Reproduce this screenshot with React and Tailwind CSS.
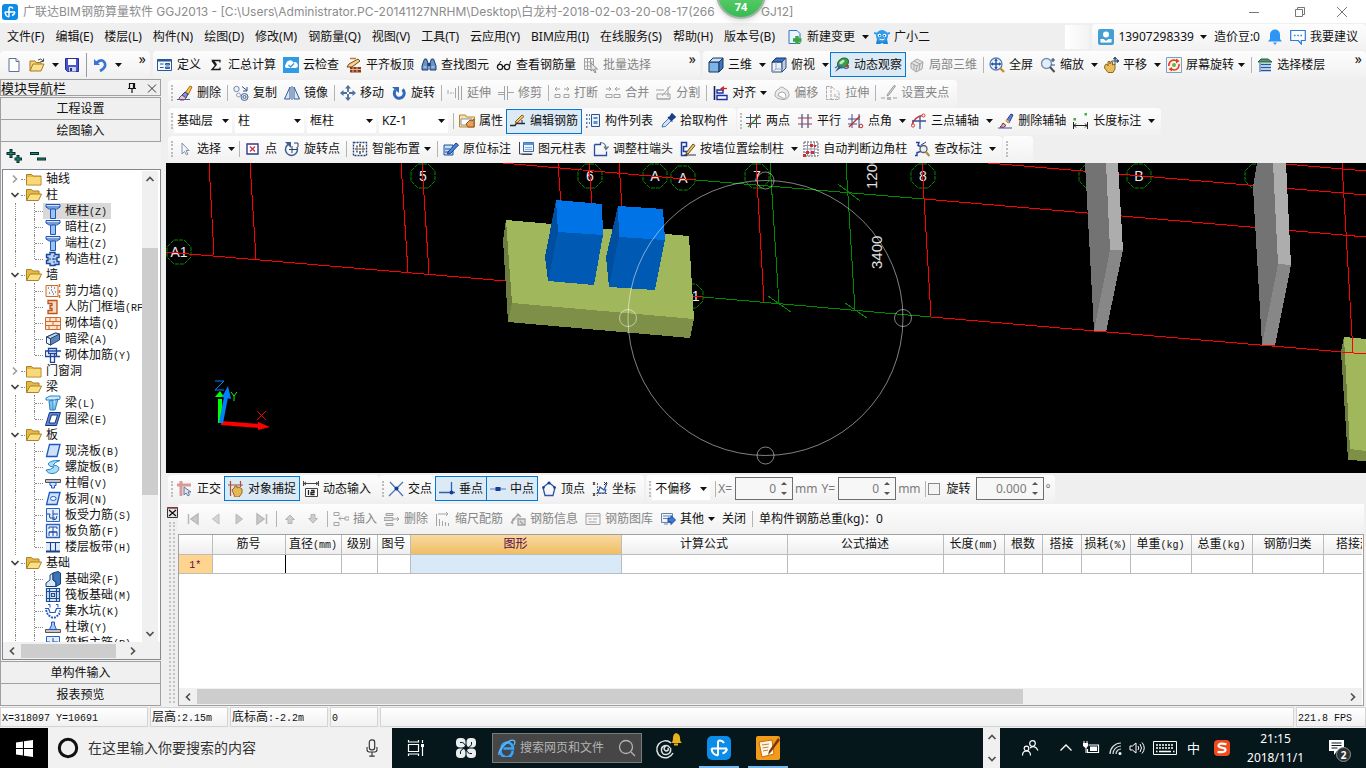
import React, { useState } from 'react';

// Icon drawings, all on a 16 x 16 grid
const ICONS = {
  // file
  newFile: <><path d="M3 1.500h7l3 3v10H3z" fill="#fff" stroke="#5b7394" /><path d="M10 1.500v3h3" fill="#dfe8f3" stroke="#5b7394" /></>,
  open: <><path d="M1 14V4h5l1 1.500h5V8" fill="#f7d57a" stroke="#a8791b" /><path d="M1 14l3-7h11l-3 7z" fill="#fbe08f" stroke="#a8791b" /><path d="M9 3q3-2.500 5 1M14.500 1.500v3h-3" fill="none" stroke="#4d4d4d" /></>,
  save: <><path d="M1.500 1.500h13v13h-11l-2-2z" fill="#4a55c8" stroke="#24308f" /><path d="M4 2h8v6H4z" fill="#fff" /><path d="M5 10h7v4.500H5z" fill="#cdd3f5" /><path d="M6 11h2v3H6z" fill="#24308f" /></>,
  undo: <><path d="M2 2v6h6z" fill="#3c74d6" /><path d="M4 6q6-5 8.500-.5T8 14" fill="none" stroke="#3c74d6" strokeWidth="2.600" /></>,
  // main tool bar
  define: <><path d="M.5 2.500h14v11H.5z" fill="#f4f8ff" stroke="#2b5797" /><path d="M.5 2.500h14v2H.5z" fill="#2b5797" /><path d="M3 7h3.500M3 10.500h3.500" stroke="#2b5797" /><path d="M8.500 6.500h4v1.500h-4zM8.500 10h4v1.500h-4z" fill="#7fb0ef" stroke="#2b5797" /></>,
  sigma: <><path d="M4.500 3.500l3.500 4.500" stroke="#1b1b1b" strokeWidth="2.400" /><path d="M12 5.500V3.500H4.500L8 8l-4 4.500h8v-2" fill="none" stroke="#1b1b1b" strokeWidth="1.300" /></>,
  cloud: <><path d="M0 0h16v16H0z" fill="#2f9be6" /><path d="M3 11a2.500 2.500 0 010-4 4 4 0 017.500-1.500A3 3 0 0113 11z" fill="#fff" /><path d="M5.500 8l2 2 3.500-3.500" fill="none" stroke="#2f9be6" strokeWidth="1.300" /></>,
  levelTop: <><path d="M4 10h11v5.500H4z" fill="#8a3a1c" /><path d="M4 12.500h11M7 10v5M11 10v5" stroke="#e8b08c" /><path d="M1 10l2-3 9-5 2 2-8 6z" fill="#f8cf8e" stroke="#6b4a1c" /><path d="M4 1.500h6" stroke="#c77b1e" strokeWidth="1.500" /></>,
  find: <><path d="M2 6l1.500-4h2L7 6v7H1V9zM9 6l1.500-4h2L14 6l1 3v4H9z" fill="#6a93c8" stroke="#1d3f73" /><path d="M6.500 6h3v3h-3z" fill="#1d3f73" /><path d="M2.500 10h3M10.500 10h3" stroke="#cfe0f5" /></>,
  glasses: <><circle cx="4" cy="10" r="2.600" fill="#fff" stroke="#1c1c1c" strokeWidth="1.300" /><circle cx="11" cy="10" r="2.600" fill="#fff" stroke="#1c1c1c" strokeWidth="1.300" /><path d="M6.500 9.500h2M1.500 9l3.500-5M13.500 9l1-5" fill="none" stroke="#1c1c1c" /></>,
  batch: <><path d="M1.500 1.500h9v11h-9zM1.500 5h9M1.500 9h9M4.500 1.500v11M7.500 1.500v6" fill="none" stroke="#a0a0a0" /><path d="M8 6v8l2-1.500L12 16l1-.5-1.500-3.500h3z" fill="#e6e6e6" stroke="#8f8f8f" /></>,
  box: <><path d="M1 5h10v10H1z" fill="#7fb4e6" stroke="#17365e" /><path d="M1 5l4-4h10l-4 4z" fill="#c9e1f7" stroke="#17365e" /><path d="M11 5l4-4v10l-4 4z" fill="#3f78b8" stroke="#17365e" /></>,
  boxTop: <><path d="M1 5h10v10H1z" fill="#f0f4fa" stroke="#30507c" /><path d="M1 5l4-4h10l-4 4z" fill="#3d72c0" stroke="#17365e" /><path d="M11 5l4-4v10l-4 4z" fill="#c0cfe3" stroke="#30507c" /><path d="M5 5v7h6M5 12l-4 3" fill="none" stroke="#8ea6c6" /></>,
  orbit: <><ellipse cx="9" cy="6" rx="6" ry="4.500" transform="rotate(-35 9 6)" fill="#3b9c4a" stroke="#1f6b30" /><ellipse cx="8" cy="5" rx="3" ry="1.500" transform="rotate(-35 8 5)" fill="#b8edb8" /><path d="M1 11q5-4 8-1t6 0" fill="none" stroke="#3e6fb8" strokeWidth="1.200" /><path d="M1 15l4-6 2.500 1.500z" fill="#35507a" /><circle cx="13.500" cy="9" r="1.500" fill="#c0392b" /></>,
  boxPart: <><path d="M2 6l6-4 6 3-1 7-6 3-5-4z" fill="#e3e3e3" stroke="#a5a5a5" /><path d="M2 6l6 3 6-4M8 9l-1 6M5 4l6 3-1 6M5 7.500V13" fill="none" stroke="#a5a5a5" /></>,
  fullScreen: <><circle cx="7" cy="7" r="6" fill="#eaf2fd" stroke="#5b7fae" strokeWidth="1.300" /><path d="M7 2.500v9M2.500 7h9" stroke="#1f4fa3" strokeWidth="1.300" /><path d="M7 1.500L5.300 4h3.400zM7 12.500L5.300 10h3.400zM1.500 7L4 5.300v3.400zM12.500 7L10 5.300v3.400z" fill="#1f4fa3" /><path d="M11 11l4 4" stroke="#d08a2e" strokeWidth="2.400" /></>,
  zoom: <><circle cx="6.500" cy="6.500" r="5" fill="#e3eefb" stroke="#7890b0" strokeWidth="1.400" /><path d="M10 10l4.500 5" stroke="#4e4e4e" strokeWidth="2" /><path d="M11 3h4M13 1v4M11 8h4" stroke="#2f4f86" strokeWidth="1.200" /></>,
  pan: <><path d="M2 8l2-1 1 2V4.500h2V7l1-2.500 1.500.5V8l1.500-1 1 1v4l-2 3.500H5L1.500 11z" fill="#e8bc5f" stroke="#8f6a1c" /><path d="M12 1v7M8.500 4h7M12 0l-1.500 2h3zM16 4l-2-1.500v3z" stroke="#3a4f74" fill="#3a4f74" /></>,
  screenTurn: <><path d="M.5.5h15v15H.5z" fill="#fff3e0" stroke="#6fa3d8" /><path d="M3 9a5 5 0 015-6l3 1M13 7a5 5 0 01-5 6l-3-1" fill="none" stroke="#e03c2e" strokeWidth="1.600" /><path d="M10 1.500L13.500 4 10 6.500zM6 14.500L2.500 12 6 10z" fill="#e03c2e" /><circle cx="8" cy="8" r="2" fill="#5cb85c" /></>,
  floors: <><path d="M1 5l3-3h7l4 3z" fill="#4f9c66" stroke="#1f5c3c" /><path d="M4 7.500h10M4 10.500h10M4 13.500h10" stroke="#1f5aa8" strokeWidth="1.600" /><path d="M3 6v9" stroke="#1f5aa8" /></>,
  // edit bar
  erase: <><path d="M8 8l5-7 2 1-4 8z" fill="#ffc24d" stroke="#a86b10" /><path d="M5 10l3-3 3 2-2 4z" fill="#7c8fe0" stroke="#303c88" /><path d="M2 13l3-3 4 3-2 2H3z" fill="#f0c4cc" stroke="#7b5060" /><path d="M0 14.500h13" stroke="#3b5f9f" /></>,
  copy: <><circle cx="3.500" cy="4" r="2.700" fill="#eef3fa" stroke="#7487a5" /><circle cx="11.500" cy="12" r="3.500" fill="#dfe8f4" stroke="#4b6592" /><circle cx="11.500" cy="12" r="1.500" fill="none" stroke="#4b6592" /><circle cx="5.500" cy="10" r="2" fill="none" stroke="#8fa0ba" /><path d="M9 1.500l5 4M14 2v4h-4" fill="none" stroke="#27518f" /></>,
  mirror: <><path d="M6 2v12H.5zM10 2v12h5.500z" fill="#d9e8f9" stroke="#345c96" /><path d="M8 1v14" stroke="#345c96" /></>,
  move: <><path d="M8 2v12M2 8h12" stroke="#4d6f9f" strokeWidth="1.800" /><path d="M8 0L5 3.500h6zM8 16l-3-3.500h6zM0 8l3.500-3v6zM16 8l-3.500-3v6z" fill="#4d6f9f" /><path d="M7 7h2v2H7z" fill="#fff" /></>,
  rotate: <><path d="M4.500 5a5 5 0 107-.5" fill="none" stroke="#3569b8" strokeWidth="3" /><path d="M1 2h7v6z" fill="#3569b8" /></>,
  extend: <><path d="M0 8h7M0 6h3" stroke="#a3a3a3" strokeDasharray="2 1" /><path d="M8.500 3v10M11.500 1v14M14.500 1v14" stroke="#a3a3a3" /></>,
  trim: <><path d="M0 7.500h6M10 7.500h6M0 9.500h6" stroke="#a3a3a3" /><path d="M6.500 1v14M9.500 1v14" stroke="#a3a3a3" /></>,
  breakAt: <path d="M1 4h5M10 4h5M3 2L1 4l2 2M13 2l2 2-2 2M1 9.500h5v3H1zM10 9.500h5v3h-5z" fill="none" stroke="#a3a3a3" />,
  join: <path d="M1 4h5M10 4h5M4 2l2 2-2 2M12 2l-2 2 2 2M1 9.500h6v3H1zM9 9.500h6v3H9z" fill="none" stroke="#a3a3a3" />,
  split: <path d="M0 5h8M1 14V9h13v5zM14.500 1L6 11M12 2v10M1 14h13" fill="none" stroke="#a3a3a3" />,
  align: <><path d="M2.500 1v14" stroke="#10225e" strokeWidth="1.600" /><path d="M5 5h6v3H5zM5 10.500h10v4H5z" fill="#fff" stroke="#1a2fa8" strokeWidth="1.400" /><path d="M12 1L8 3.500 12 6z" fill="#d62828" /><path d="M12 3.500h3" stroke="#d62828" strokeWidth="1.300" /></>,
  offset: <><path d="M1 11q0-6 4-7 2-4 6 0 4 1 4 7-2 4-7 3.500T1 11z" fill="#ebebeb" stroke="#a8a8a8" /><path d="M4 11q0-4 4-4t4 4-4 1.500T4 11z" fill="#fff" stroke="#a8a8a8" /></>,
  stretch: <path d="M1.500 1.500H6v13H1.500zM6 1.500l4 3M6 14.500h8v-7l-2-2M10 9v3h3" fill="none" stroke="#a8a8a8" strokeDasharray="3 1" />,
  grip: <><path d="M14.500 1L8 10l-2 1 1-2.500 6-8z" fill="#d6d6d6" stroke="#9b9b9b" /><path d="M0 13h4M12 13h4" stroke="#9b9b9b" /><path d="M6 12h4v3H6z" fill="#b5b5b5" /></>,
  // member bar
  props: <><path d="M.5 2h6l1 2h8v10H.5z" fill="#f9e2a4" stroke="#b58a2c" /><path d="M2 6h11v6H2z" fill="#fff" stroke="#7e93b5" /><path d="M7 11l4-4 2 1 2-2v8H9z" fill="#eaa05a" stroke="#935018" /></>,
  rebar: <><path d="M0 12.500h5q1-3 4-2h6" fill="none" stroke="#2b2b2b" strokeWidth="1.500" /><path d="M12 10.500V7" stroke="#2b2b2b" /><path d="M5 9l7-7 2 1.500-7 6.500z" fill="#f7c66b" stroke="#8a5a14" /></>,
  list: <><path d="M6.500 1.500h8v12h-8z" fill="#e9f1fd" stroke="#28518f" /><path d="M8.500 4h4v2h-4zM8.500 8h4v3h-4z" fill="#5d8fd8" /><path d="M1 2h1.500M1 6h1.500M1 10h1.500M1 14h1.500M4 2h1M4 6h1M4 10h1" stroke="#28518f" strokeWidth="1.600" /></>,
  picker: <><path d="M2 14l1-3 6-6 2.500 2.500-6 6z" fill="#cfe4fb" stroke="#4a76b4" /><path d="M8 4l4.500 4.500M10 4l2-3 3 3-3 2.500z" fill="#1b3f8a" stroke="#1b3f8a" strokeWidth="1.600" /></>,
  twoPoint: <><path d="M4.500 1v14M10.500 1v14M0 4.500h15M0 10.500h15" stroke="#444b66" /><path d="M2 14L14 2" stroke="#2d9b38" strokeWidth="1.500" /><circle cx="4.500" cy="11" r="1.300" fill="#c42b2b" /><circle cx="10.500" cy="5" r="1.300" fill="#c42b2b" /></>,
  parallel: <><path d="M5 1v14M11 1v14" stroke="#3f4f8f" strokeWidth="1.200" /><path d="M1 5h14M1 11h14" stroke="#a83a4a" strokeWidth="1.200" /></>,
  pointAngle: <><path d="M4 1v14M11 1v14M0 6h12M0 11h9" stroke="#3f4f8f" /><path d="M1 14L12 3" stroke="#c42b2b" strokeWidth="1.300" /><circle cx="13" cy="13" r="1.800" fill="none" stroke="#c42b2b" /></>,
  threePoint: <><path d="M1 13q1-9 12-11" fill="none" stroke="#d23333" strokeWidth="1.400" /><path d="M9 3v13M1 8h14" stroke="#3f4f8f" strokeWidth="1.300" /><circle cx="2" cy="12.500" r="1.600" fill="#fff" stroke="#d23333" /><circle cx="12.500" cy="2.500" r="1.500" fill="#fff" stroke="#d23333" /></>,
  brush: <><path d="M8 8l5-7 2 1-4 8z" fill="#5f84d6" stroke="#233f86" /><path d="M8 7l3 2.500" stroke="#f3b13c" strokeWidth="2" /><path d="M2 14q2-1 3-4l3 2.500Q6 15.500 2 14z" fill="#e7b0b8" stroke="#6c3040" /><path d="M0 15h14" stroke="#3f4f8f" /></>,
  dimension: <><path d="M.5 9v7M14.500 9v7M1 12.500h13M3 10.500l-2 2 2 2M12 10.500l2 2-2 2" fill="none" stroke="#222" /><path d="M.5 5h2.500v2.500H.5zM11.500 0H14v2.500h-2.500z" fill="#3fae49" /></>,
  // draw bar
  pointer: <path d="M5 2v11l2.500-2.500L9.500 14l1.500-1-2-3.500h3z" fill="#f5f5f5" stroke="#8091ad" />,
  point: <><path d="M2 3h11v10H2z" fill="#fff" stroke="#2c3e86" strokeWidth="1.400" /><path d="M5 5.500l5 5M10 5.500l-5 5" stroke="#c8324a" strokeWidth="1.300" /><path d="M2 3h1M12 3h1" stroke="#c8324a" /></>,
  rotPoint: <><path d="M5 3a6 6 0 108 3" fill="none" stroke="#3b5f92" strokeWidth="1.500" /><path d="M1 1h6v6z" fill="#3b5f92" /><path d="M8 5v7M5 8.500h8M10 2h4v4" fill="none" stroke="#2c3e66" /></>,
  smart: <><path d="M1.500 1.500h13v13h-13z" fill="#fff" stroke="#27407a" strokeDasharray="2 1" strokeWidth="1.400" /><path d="M8 3v3M8 10v3M3 8h3M10 8h3M5 4.500v2M11 4.500v2M5 9.500v2M11 9.500v2M6.500 8h3" stroke="#1c1c1c" strokeWidth="1.200" /></>,
  noteIn: <><path d="M1 4h9v10H1z" fill="#c7dcf5" stroke="#1f4fa3" /><path d="M2 11h6M2 8h5" stroke="#1f4fa3" /><path d="M5 11l8-9 2.500 2-8 8.500-3 .5z" fill="#4a86dc" stroke="#143d82" /></>,
  tableCol: <><path d="M5.500 1.500h10v9h-10z" fill="#e9f2fd" stroke="#3d68a8" /><path d="M5.500 1.500h10v2.500h-10z" fill="#5b8fd6" /><path d="M7 6.500h7M7 8.500h7" stroke="#8aaedb" /><path d="M1.500 1v12h13M4 13.500h10" fill="none" stroke="#39414f" /></>,
  colEnd: <><path d="M1.500 3.500h6v-2M1.500 3.500v11h12v-4" fill="none" stroke="#2a4c9c" strokeWidth="1.300" /><path d="M7 1.500q6 0 6 6M11 5.500l2 3 2.500-3" fill="none" stroke="#5b6e93" strokeWidth="1.200" /></>,
  byWall: <><path d="M1.500 1.500h5v4h-3v5h3v4h-5z" fill="#fff" stroke="#1c3f9c" strokeWidth="1.500" /><path d="M4 14h12" stroke="#333" /><path d="M6 12l7-9 2 1.500-7 8.500z" fill="#ecc36a" stroke="#6d5016" /></>,
  corner: <><path d="M1 1h14v14H1z" fill="#fff" stroke="#5c5c5c" strokeDasharray="2 1" /><path d="M4.500 1v14M11.500 1v14M8 1v14M1 4.500h14M1 8h14M1 11.500h14" stroke="#8d9ab5" /><path d="M7 3h3v3H7zM3 10h3v3H3zM8 10h3v3H8zM11 4h2v2h-2zM0 13h3v3H0z" fill="#d23030" /></>,
  checkNote: <><path d="M2 1.500h3l-1 3 3 1v5l-4 1v3H1" fill="none" stroke="#1c3fa8" strokeWidth="1.400" /><circle cx="9.500" cy="8" r="3.500" fill="#e6eefa" stroke="#5d5d5d" strokeWidth="1.300" /><path d="M12 11l3.500 4" stroke="#b98a3a" strokeWidth="2.200" /><path d="M7 4l5-3" stroke="#1c3fa8" /></>,
  // snap bar
  ortho: <><path d="M0 4h14M4 0v15" stroke="#d99a9a" strokeWidth="3" /><path d="M7 6v8l2-2 2 3 1.500-1-1.500-3h3z" fill="#dfe6f2" stroke="#5d7398" /></>,
  snap: <><path d="M2.500 0v15M12.500 0v6M0 4h15" stroke="#b04a3c" strokeWidth="1.200" /><path d="M4 9l2-2 1-2h2v2l2-1 3 2v4l-3 4H7z" fill="#e8b657" stroke="#8f6a1c" /></>,
  dynInput: <><path d="M.5 0v5M15.500 0v5M1 2.500h14M3 1L1 2.500 3 4M13 1l2 1.500L13 4" fill="none" stroke="#444" /><path d="M2.500 7.500h12v8h-12z" fill="#fff" stroke="#444" /><path d="M5.500 9v5M8 9.500h3v2H8v2h3.500" fill="none" stroke="#222" strokeWidth="1.300" /></>,
  cross: <><path d="M2 1l13 14M15 1L1 15" stroke="#4a76b8" strokeWidth="1.300" /><circle cx="8.500" cy="7.500" r="2" fill="#143d9c" /></>,
  perp: <><path d="M0 11.500h16M12.500 1v11" stroke="#2f5fae" strokeWidth="1.300" /><circle cx="12.500" cy="11.500" r="2" fill="#143d9c" /></>,
  mid: <><path d="M0 8h16" stroke="#6f96cf" strokeWidth="1.300" /><path d="M5.500 6h5v4h-5z" fill="#143d9c" /></>,
  vertex: <><path d="M8 1.500l6 5-2 8H4l-2-8z" fill="none" stroke="#2a55a8" strokeWidth="1.300" /><circle cx="8" cy="2" r="1.500" fill="#143d9c" /><circle cx="2.500" cy="6.500" r="1.300" fill="#143d9c" /><circle cx="13.500" cy="6.500" r="1.300" fill="#143d9c" /></>,
  coord: <><path d="M5.500 2v13M4 12.500h12" stroke="#666" strokeDasharray="2 1" /><path d="M6 12l2-6 4 3 3-7M6 12h7l1-4" fill="none" stroke="#2a55a8" strokeWidth="1.200" /><path d="M1 1l2 3M3 1L1 4M12 1l3 3M15 1l-3 3M1 12l2 3M3 12l-2 3" stroke="#333" /></>,
  // rebar panel
  first: <path d="M3.500 3v10M13 3v10L6 8z" fill="#c9c9c9" stroke="#b8b8b8" strokeWidth="1.500" />,
  prev: <path d="M11 3v10L4.500 8z" fill="#d5d5d5" stroke="#bcbcbc" />,
  next: <path d="M5 3v10l6.500-5z" fill="#c9c9c9" stroke="#b8b8b8" />,
  last: <path d="M12.500 3v10M3 3v10l7-5z" fill="#c9c9c9" stroke="#b8b8b8" strokeWidth="1.500" />,
  up: <path d="M8 4l4.500 4.500H10v4H6v-4H3.500z" fill="#cdcdcd" stroke="#b5b5b5" />,
  down: <path d="M8 12l4.500-4.500H10v-4H6v4H3.500z" fill="#cdcdcd" stroke="#b5b5b5" />,
  insertRow: <path d="M1 1.500h5v3H1zM1 11.500h5v3H1zM12 6h4v3h-4zM6 7.500h6M8 5.500l-2 2 2 2" fill="none" stroke="#a3a3a3" />,
  deleteRow: <path d="M2 2.500h7v2H2zM0 6.500h9v3H0zM2 12.500h7v2H2zM9 8h6M13 6l2 2-2 2" fill="#e0e0e0" stroke="#a3a3a3" />,
  scaleBar: <path d="M1.500 3v12M4.500 8v7M7.500 10v5M10.500 11v4M13.500 12v3M3 3h10M11 1l2 2-2 2" fill="none" stroke="#a3a3a3" />,
  rebarInfo: <path d="M1 12l7-9 3 3M3 13q-2-3 1-6M8 8h7v6H8zM10 10l3 3" fill="#dedede" stroke="#a3a3a3" strokeWidth="1.300" />,
  rebarLib: <path d="M1 2.500h14v11H1zM1 5h14M3.500 8h3M8 8h4M3.500 11h8" fill="none" stroke="#a3a3a3" />,
  other: <><path d="M1.500 2.500h11v9h-11z" fill="#f0f4fb" stroke="#6a83ab" /><path d="M3 5h7M3 7.500h5M4 13h4" stroke="#6a83ab" /><path d="M8 7h3V4.500L15.500 9 11 13.500V11H8z" fill="#3f78dc" stroke="#174a9c" /></>,
  // menu
  change: <><path d="M2 1.500h8l3 3v10H2z" fill="#eaf4ff" stroke="#2c77c2" /><path d="M10 7v8M6 11h8.500" stroke="#3aa53c" strokeWidth="3.400" /></>,
  mascot: <><path d="M3 10L2 15h4l2-1 2 1h4l-1-5z" fill="#1d86d6" /><circle cx="8" cy="7" r="6" fill="#2b9df0" /><path d="M0 4l4 1M16 4l-4 1" stroke="#2b9df0" strokeWidth="2" /><circle cx="5.500" cy="6.500" r="1.800" fill="#fff" /><circle cx="10.500" cy="6.500" r="1.800" fill="#fff" /><circle cx="5.800" cy="6.700" r=".8" fill="#123" /><circle cx="10.200" cy="6.700" r=".8" fill="#123" /><path d="M5.500 10q2.500 1.800 5 0" stroke="#fff" fill="none" /></>,
  user: <><rect width="16" height="16" rx="2" fill="#459fd4" /><circle cx="8" cy="5.500" r="3" fill="#fff" /><path d="M2.500 13.500V10h3L8 12l2.500-2h3v3.500z" fill="#fff" /></>,
  bell: <><path d="M3 10V5.500a5 5 0 0110 0V10l2 2.500H1z" fill="#2d95f5" /><path d="M6 13.500h4L8 16z" fill="#2d95f5" /></>,
  chat: <><path d="M.7 1.500h14.600v10h-4V15l-3-3.500H.7z" fill="#fff" stroke="#2d7bd8" strokeWidth="1.200" /><path d="M4 6.500h1.500M7.300 6.500h1.500M10.500 6.500H12" stroke="#2d7bd8" strokeWidth="1.500" /></>,
  // tree
  folder: <><path d="M.5 3.500h5l1.500 1.500h8v9H.5z" fill="#e8b93f" stroke="#a9822a" /><path d="M1 6h13.500v7.500H1z" fill="#f8d877" /></>,
  folderOpen: <><path d="M.5 13.500v-11h5L7 4h6v3" fill="#e8b93f" stroke="#a9822a" /><path d="M.5 13.500L4 7h11.500L12.500 13.500z" fill="#fbdf85" stroke="#a9822a" /></>,
  column: <><path d="M1 1.500h14V4l-3 2H4L1 4z" fill="#cfe3fb" stroke="#1f55b5" /><path d="M5.500 6h5v9.500h-5z" fill="#9cc3f3" stroke="#1f55b5" /><path d="M1 4h14" stroke="#1f55b5" /></>,
  columnTie: <><path d="M5 1.500h5v2h4v3h-2v4h2v3h-4v1H5v-2H1.500v-3H3v-3H1.500v-3H5z" fill="#b9d5f7" stroke="#1a4698" strokeWidth="1.400" /><path d="M9 4v8M4 8h8" stroke="#1a4698" strokeDasharray="2 1" /></>,
  shearWall: <><path d="M1 2.500h12v11H1z" fill="#f4f4f4" stroke="#d56b2b" /><path d="M3 5h1M6 7h1M9 5h1M4 10h1M8 11h1M10 9h1M6 4h1M7 9h1" stroke="#444" /><path d="M14.500 1v3M14.500 7v3M14.500 12v3" stroke="#d56b2b" strokeWidth="1.500" /></>,
  doorWall: <path d="M3 1.500h9v13H3v-3h4v-2H5v-3h2v-2H3z" fill="#f6dcc6" stroke="#b9521b" strokeWidth="1.300" />,
  brick: <><path d="M.5 2.500h15v12H.5z" fill="#ffe6d3" stroke="#cf6a2d" /><path d="M1 6.500h14M1 10.500h14M5 2.500v4M11 2.500v4M8 6.500v4M4 10.500v4M12 10.500v4" stroke="#cf6a2d" /></>,
  hiddenBeam: <><path d="M1.500 6l9-4 4 1v6l-9 5-4-2z" fill="#5b86bd" stroke="#27436e" /><path d="M1.500 6l4 1.500v6.500l-4-2z" fill="#e9f1fb" stroke="#27436e" /><path d="M5.500 7.500l9-4.500-4-1-9 4z" fill="#c4d7ee" stroke="#27436e" /></>,
  brickRebar: <path d="M3.500 1.500h8v5h-8zM0 4h16M0 9.500h15M.5 4v5.500M5.500 6.500v9h4v-9M11.500 4v5" fill="none" stroke="#1b47a0" strokeWidth="1.300" />,
  beam: <><path d="M1 3l4-2h10v3l-3 1H1z" fill="#cfe8fb" stroke="#2383c6" /><path d="M4 6l4-1v10H5zM10 5l3-1-3 11H8" fill="#7fc1ee" stroke="#2383c6" /></>,
  ring: <><path d="M4.500 1.500h11l-4 13H.5z" fill="#5f8ad8" stroke="#15357c" /><path d="M6.500 4h6l-2.500 8H4z" fill="#fff" stroke="#15357c" /></>,
  slab: <path d="M4.500 1.500H15l-3 12H1.500z" fill="#cfe2fb" stroke="#1d57c0" strokeWidth="1.300" />,
  spiral: <path d="M15 1.500Q5 1 3 5q1 3 6 3Q6 11 1 11q2 4 7 3.500 6-1 6-6-2-2.500-6-2.500 2-3 7-4.500z" fill="#a9dcf7" stroke="#2187c8" />,
  cap: <><path d="M.5 4.500h15v3H.5z" fill="#c4c4c4" stroke="#555" /><path d="M5 7.500h6v3H9.500V13h-3v-2.500H5z" fill="#cfe2fb" stroke="#1d57c0" /></>,
  slabHole: <><path d="M4.500 1.500H15l-3 12H1.500z" fill="#cfe2fb" stroke="#1d57c0" strokeWidth="1.300" /><ellipse cx="8.300" cy="7.500" rx="2.800" ry="2" fill="#fff" stroke="#1d57c0" /></>,
  slabRebar: <><path d="M1.500 1.500h13v13h-13z" fill="#e4effd" stroke="#2a62c4" /><path d="M2 7h3M5 11h5M8 3v10M8 13q4 0 4-4M8 7h5M5 11q-1-2 0-4" fill="none" stroke="#1b47a0" /></>,
  slabNeg: <><path d="M1.500 1.500h13v13h-13z" fill="#eef5ff" stroke="#2a62c4" strokeWidth="1.300" /><path d="M4 13V9h8v4M4 6V4h8v2M8 4v9M4 9h8" fill="none" stroke="#1b47a0" /></>,
  strip: <><path d="M1 3.500h14v9H1z" fill="#d7e7fb" /><path d="M1 12.500h14" stroke="#1c3f86" strokeWidth="2" /><path d="M1 3.500h14M5.500 3v9M10.500 3v9" stroke="#1c3f86" /><path d="M3 5v6M8 5v6M13 5v6" stroke="#fff" strokeDasharray="1 1" /></>,
  footBeam: <><path d="M1 12l4-3V4l3-2v7l3 2v4.500H1z" fill="#d9e8f8" stroke="#173f73" /><path d="M8 2l5-1.500L15.500 2v11l-4.500 2.500V11L8 9z" fill="#3c74b5" stroke="#173f73" /></>,
  raft: <path d="M1.500 1.500h13v13h-13zM4.500 1.500v13M11.500 1.500v13M1.500 4.500h13M1.500 11.500h13M6.500 6.500h3v3h-3z" fill="#d9e8fb" stroke="#1a4f96" strokeWidth="1.200" />,
  pit: <><path d="M0 5.500h3.500l1.500 4h5l1.500-4H16" fill="none" stroke="#1d57c0" strokeWidth="1.200" /><path d="M1 7l2 5 4 2.500h3l4-3 1-4" fill="none" stroke="#1d57c0" strokeDasharray="2 1" strokeWidth="1.800" /><path d="M3 1.500h2v3M11 1.500h2v3" fill="none" stroke="#1d57c0" /></>,
  pier: <><path d="M.5 10.500h15v3H.5z" fill="#c4c4c4" stroke="#555" /><path d="M6.500 3h3v3l2 4.500h-7l2-4.500z" fill="#a9c8f3" stroke="#1d57c0" /></>,
};

const Icon = ({ name, className = 'size-4' }) => (
  <svg viewBox="0 0 16 16" className={`${className} shrink-0`} aria-hidden="true">{ICONS[name]}</svg>
);

const Arrow = () => (
  <svg viewBox="0 0 7 4" className="h-1 w-[7px] shrink-0" aria-hidden="true"><path d="M0 0h7L3.500 4z" fill="#111" /></svg>
);

const CHEVRONS = { up: 'M1.500 7L5 3.500 8.500 7', down: 'M1.500 3L5 6.500 8.500 3', left: 'M7 1.500L3.500 5 7 8.500', right: 'M3 1.500L6.500 5 3 8.500' };

const Chevron = ({ dir, color = '#505050' }) => (
  <svg viewBox="0 0 10 10" className="size-[10px] shrink-0" aria-hidden="true"><path d={CHEVRONS[dir]} fill="none" stroke={color} strokeWidth="1.700" /></svg>
);

const Grip = () => <span className="mr-px h-4 w-0 shrink-0 border-l-2 border-dotted border-[#bdbdbd]" />;
const Sep = () => <span className="mx-[2px] h-4 w-px shrink-0 bg-[#b4b4b4]" />;

// Mixed text: Chinese glyphs are full width, Latin ones half width
const Song = ({ children }) =>
  children.split(/([\x20-\x7e]+)/).map((part, i) =>
    i % 2 ? <span key={i} className="whitespace-pre text-[10px] leading-none [font-family:'Liberation_Mono',monospace]">{part}</span> : part
  );

const Tool = ({ icon, label, title, arrow, disabled, active }) => (
  <>
    <button
      type="button"
      disabled={disabled}
      aria-label={title}
      aria-pressed={active}
      className={`-ml-px flex h-[25px] shrink-0 items-center gap-1 whitespace-nowrap border px-[3px] ${
        active ? 'relative border-[#0078d7] bg-[#dceaf6]' : 'border-transparent'
      } ${disabled ? 'text-[#858585]' : 'text-[#111]'}`}
    >
      {icon && <Icon name={icon} />}
      {label && <span>{label}</span>}
      {arrow === 'menu' && <Arrow />}
    </button>
    {arrow === 'split' && (
      <button type="button" aria-label={`${label || title} 更多`} className="flex h-[25px] w-3 shrink-0 items-center justify-center"><Arrow /></button>
    )}
  </>
);

const Tools = ({ items }) => items.map((item, i) => (item === '|' ? <Sep key={i} /> : <Tool key={i} {...item} />));

const Group = ({ children, className = 'pl-[3px] pr-1' }) => (
  <div className={`flex h-[27px] shrink-0 items-center rounded-sm bg-linear-to-b from-[#fdfdfd] to-[#f1f1f1] ${className}`}>{children}</div>
);

const Combo = ({ label, options, className }) => (
  <label className={`relative mr-[3px] flex h-[23px] shrink-0 items-center bg-white ${className}`}>
    <select aria-label={label} className="h-full w-full appearance-none bg-transparent pl-[3px] outline-none">
      {options.map(o => <option key={o}>{o}</option>)}
    </select>
    <span className="pointer-events-none absolute right-[3px]"><Arrow /></span>
  </label>
);

const Spin = ({ label, value, className }) => (
  <span className={`flex h-[23px] shrink-0 items-center border border-[#6e6e6e] bg-[#f7f7f7] ${className}`}>
    <input aria-label={label} defaultValue={value} disabled className="w-full min-w-0 flex-1 bg-transparent text-right text-[#7b7b7b]" />
    <span className="flex h-full w-4 shrink-0 flex-col items-center justify-around">
      <svg viewBox="0 0 6 3" className="h-[3px] w-[6px]"><path d="M0 3h6L3 0z" fill="#555" /></svg>
      <svg viewBox="0 0 6 3" className="h-[3px] w-[6px]"><path d="M0 0h6L3 3z" fill="#555" /></svg>
    </span>
  </span>
);

const MENUS = ['文件(F)', '编辑(E)', '楼层(L)', '构件(N)', '绘图(D)', '修改(M)', '钢筋量(Q)', '视图(V)', '工具(T)', '云应用(Y)', 'BIM应用(I)', '在线服务(S)', '帮助(H)', '版本号(B)'];

const MAIN_TOOLS = [
  { icon: 'define', label: '定义' },
  { icon: 'sigma', label: '汇总计算' },
  { icon: 'cloud', label: '云检查' },
  { icon: 'levelTop', label: '平齐板顶' },
  { icon: 'find', label: '查找图元' },
  { icon: 'glasses', label: '查看钢筋量' },
  { icon: 'batch', label: '批量选择', disabled: true },
];

const VIEW_TOOLS = [
  { icon: 'box', label: '三维', arrow: 'split' },
  { icon: 'boxTop', label: '俯视', arrow: 'split' },
  { icon: 'orbit', label: '动态观察', active: true },
  { icon: 'boxPart', label: '局部三维', disabled: true },
  '|',
  { icon: 'fullScreen', label: '全屏' },
  { icon: 'zoom', label: '缩放', arrow: 'split' },
  { icon: 'pan', label: '平移', arrow: 'split' },
  { icon: 'screenTurn', label: '屏幕旋转', arrow: 'menu' },
  '|',
  { icon: 'floors', label: '选择楼层' },
];

const EDIT_TOOLS = [
  { icon: 'erase', label: '删除' },
  '|',
  { icon: 'copy', label: '复制' },
  { icon: 'mirror', label: '镜像' },
  '|',
  { icon: 'move', label: '移动' },
  { icon: 'rotate', label: '旋转' },
  '|',
  { icon: 'extend', label: '延伸', disabled: true },
  { icon: 'trim', label: '修剪', disabled: true },
  '|',
  { icon: 'breakAt', label: '打断', disabled: true },
  { icon: 'join', label: '合并', disabled: true },
  { icon: 'split', label: '分割', disabled: true },
  '|',
  { icon: 'align', label: '对齐', arrow: 'menu' },
  { icon: 'offset', label: '偏移', disabled: true },
  { icon: 'stretch', label: '拉伸', disabled: true },
  '|',
  { icon: 'grip', label: '设置夹点', disabled: true },
];

const MEMBER_TOOLS = [
  '|',
  { icon: 'props', label: '属性' },
  { icon: 'rebar', label: '编辑钢筋', active: true },
  { icon: 'list', label: '构件列表' },
  { icon: 'picker', label: '拾取构件' },
];

const AXIS_TOOLS = [
  { icon: 'twoPoint', label: '两点' },
  { icon: 'parallel', label: '平行' },
  { icon: 'pointAngle', label: '点角', arrow: 'split' },
  { icon: 'threePoint', label: '三点辅轴', arrow: 'split' },
  { icon: 'brush', label: '删除辅轴' },
  { icon: 'dimension', label: '长度标注', arrow: 'split' },
];

const DRAW_TOOLS = [
  { icon: 'pointer', label: '选择', arrow: 'split' },
  '|',
  { icon: 'point', label: '点' },
  { icon: 'rotPoint', label: '旋转点' },
  '|',
  { icon: 'smart', label: '智能布置', arrow: 'menu' },
  '|',
  { icon: 'noteIn', label: '原位标注' },
  { icon: 'tableCol', label: '图元柱表' },
  { icon: 'colEnd', label: '调整柱端头' },
  { icon: 'byWall', label: '按墙位置绘制柱', arrow: 'split' },
  { icon: 'corner', label: '自动判断边角柱' },
  { icon: 'checkNote', label: '查改标注', arrow: 'split' },
];

const SNAP_MODES = [
  { icon: 'ortho', label: '正交' },
  { icon: 'snap', label: '对象捕捉', active: true },
  { icon: 'dynInput', label: '动态输入' },
];

const SNAP_POINTS = [
  { icon: 'cross', label: '交点' },
  { icon: 'perp', label: '垂点', active: true },
  { icon: 'mid', label: '中点', active: true },
  { icon: 'vertex', label: '顶点' },
  { icon: 'coord', label: '坐标' },
];

const REBAR_TOOLS = [
  { icon: 'first', title: '首行', disabled: true },
  { icon: 'prev', title: '上一行', disabled: true },
  { icon: 'next', title: '下一行', disabled: true },
  { icon: 'last', title: '末行', disabled: true },
  '|',
  { icon: 'up', title: '上移', disabled: true },
  { icon: 'down', title: '下移', disabled: true },
  '|',
  { icon: 'insertRow', label: '插入', disabled: true },
  { icon: 'deleteRow', label: '删除', disabled: true },
  { icon: 'scaleBar', label: '缩尺配筋', disabled: true },
  { icon: 'rebarInfo', label: '钢筋信息', disabled: true },
  { icon: 'rebarLib', label: '钢筋图库', disabled: true },
  { icon: 'other', label: '其他', arrow: 'menu' },
  { label: '关闭' },
  '|',
];

const TREE = [
  { label: '轴线' },
  { label: '柱', items: [['column', '框柱(Z)'], ['column', '暗柱(Z)'], ['column', '端柱(Z)'], ['columnTie', '构造柱(Z)']] },
  { label: '墙', items: [['shearWall', '剪力墙(Q)'], ['doorWall', '人防门框墙(RF)'], ['brick', '砌体墙(Q)'], ['hiddenBeam', '暗梁(A)'], ['brickRebar', '砌体加筋(Y)']] },
  { label: '门窗洞' },
  { label: '梁', items: [['beam', '梁(L)'], ['ring', '圈梁(E)']] },
  {
    label: '板',
    items: [['slab', '现浇板(B)'], ['spiral', '螺旋板(B)'], ['cap', '柱帽(V)'], ['slabHole', '板洞(N)'], ['slabRebar', '板受力筋(S)'], ['slabNeg', '板负筋(F)'], ['strip', '楼层板带(H)']],
  },
  {
    label: '基础',
    items: [['footBeam', '基础梁(F)'], ['raft', '筏板基础(M)'], ['pit', '集水坑(K)'], ['pier', '柱墩(Y)'], ['slabRebar', '筏板主筋(R)']],
  },
];

const COLUMNS = [
  ['', 'w-[33px]'],
  ['筋号', 'w-[73px]'],
  ['直径(mm)', 'w-[56px]'],
  ['级别', 'w-[36px]'],
  ['图号', 'w-[33px]'],
  ['图形', 'w-[211px]'],
  ['计算公式', 'w-[166px]'],
  ['公式描述', 'w-[156px]'],
  ['长度(mm)', 'w-[61px]'],
  ['根数', 'w-[38px]'],
  ['搭接', 'w-[39px]'],
  ['损耗(%)', 'w-[49px]'],
  ['单重(kg)', 'w-[61px]'],
  ['总重(kg)', 'w-[61px]'],
  ['钢筋归类', 'w-[71px]'],
  ['搭接形式', 'w-[74px]'],
];

function TitleBar() {
  return (
    <header className="relative flex h-[23px] shrink-0 items-center bg-white pl-[2px] text-[#8c8c8c]">
      <svg viewBox="0 0 16 16" className="mr-[5px] size-4" aria-hidden="true">
        <rect width="16" height="16" rx="3" fill="#0c8ce9" />
        <path d="M11 4.500Q10 3 8.500 3T7 5v8M3 8h10M3 8q.5 4.500 4 5M13 8q-.5 2.500-3 3.500" fill="none" stroke="#fff" strokeWidth="1.500" />
      </svg>
      <h1 className="flex flex-1 whitespace-nowrap [font-family:'Inter','Noto_Sans_CJK_SC',sans-serif]">
        <span className="w-[698px] shrink-0">{'广联达BIM钢筋算量软件 GGJ2013 - [C:\\Users\\Administrator.PC-20141127NRHM\\Desktop\\白龙村-2018-02-03-20-08-17(266'}</span>
        <span className="ml-10">GJ12]</span>
      </h1>
      <div className="flex gap-[22px] pr-4">
        <button type="button" aria-label="最小化" className="px-1">
          <svg viewBox="0 0 16 16" className="size-4"><path d="M3 8.500h10" stroke="#777" /></svg>
        </button>
        <button type="button" aria-label="还原" className="px-1">
          <svg viewBox="0 0 16 16" className="size-4"><path d="M3.500 5.500h7v7h-7zM5.500 5.500v-2h7v7h-2" fill="none" stroke="#777" /></svg>
        </button>
        <button type="button" aria-label="关闭窗口">
          <svg viewBox="0 0 16 16" className="size-4"><path d="M3 3l10 10M13 3L3 13" stroke="#777" /></svg>
        </button>
      </div>
      {/* floating accelerator ball */}
      <div className="absolute -top-[31px] left-[716px] z-10 flex size-[50px] items-end justify-center rounded-full border-2 border-[#a9b5ac] bg-linear-to-b from-[#7be07f] to-[#35bb53] pb-1 text-[11px] font-bold leading-3 text-white shadow-md">74</div>
    </header>
  );
}

function MenuBar() {
  return (
    <div className="flex h-[28px] shrink-0 items-center pl-[2px]">
      <nav className="flex items-center gap-px">
        {MENUS.map(m => <button key={m} type="button" className="whitespace-nowrap px-[5px]">{m}</button>)}
      </nav>
      <div className="ml-1 flex items-center">
        <Tools items={[{ icon: 'change', label: '新建变更', arrow: 'split' }, { icon: 'mascot', label: '广小二' }]} />
      </div>
      <span className="ml-auto mr-[3px] h-6 w-6 bg-linear-to-r from-white to-[#f3f3f3]" />
      <Group>
        <Tools items={[{ icon: 'user', label: '13907298339', arrow: 'split' }]} />
        <span className="mx-1">造价豆:0</span>
        <Tools items={[{ icon: 'bell', title: '消息' }, { icon: 'chat', label: '我要建议' }]} />
      </Group>
    </div>
  );
}

function MainBar() {
  return (
    <div className="flex h-[27px] shrink-0 items-center gap-[3px]">
      <Group className="w-[150px] pl-[3px] pr-1">
        <Tools items={[{ icon: 'newFile', title: '新建' }, { icon: 'open', title: '打开', arrow: 'split' }, { icon: 'save', title: '保存' }]} />
        <span className="mx-[2px] h-6 w-px bg-[#9a9a9a]" />
        <Tools items={[{ icon: 'undo', title: '撤销', arrow: 'split' }]} />
        <span className="-mt-3 ml-auto text-sm">»</span>
      </Group>
      <Group className="w-[547px] pl-px pr-1">
        <Tools items={MAIN_TOOLS} />
        <span className="-mt-3 ml-auto text-sm">»</span>
      </Group>
      <Group className="min-w-0 flex-1 pl-[2px] pr-1">
        <Tools items={VIEW_TOOLS} />
        <span className="-mt-3 ml-auto text-sm">»</span>
      </Group>
    </div>
  );
}

function TreeLeaf({ icon, label, last, selected, onSelect }) {
  return (
    <li className="flex h-4 items-center">
      <span className="h-full w-[13px] shrink-0 border-r border-dotted border-[#8a8a8a]" />
      <span className={`w-[19px] shrink-0 self-start border-r border-dotted border-[#8a8a8a] ${last ? 'h-1/2' : 'h-full'}`} />
      <span className="w-2 shrink-0 border-t border-dotted border-[#8a8a8a]" />
      <button type="button" onClick={onSelect} className={`flex h-4 items-center gap-1 whitespace-nowrap pl-[2px] pr-1 leading-4 ${selected ? 'bg-[#d9d9d9]' : ''}`}>
        <Icon name={icon} />
        <span><Song>{label}</Song></span>
      </button>
    </li>
  );
}

function Sidebar() {
  const [selected, setSelected] = useState('框柱(Z)');
  const [closed, setClosed] = useState({});
  const wide = 'flex h-[22px] w-full shrink-0 items-center justify-center border-x border-b border-[#a0a0a0] bg-[#f0f0f0]';

  return (
    <aside className="flex w-[161px] shrink-0 flex-col">
      <div className="flex h-[17px] shrink-0 items-center border border-[#a0a0a0] text-[13px] leading-4">
        <span className="flex-1">模块导航栏</span>
        <button type="button" aria-label="固定">
          <svg viewBox="0 0 12 12" className="mr-2 size-3"><path d="M3.500 1.500h5v5h-5zM7.500 1.500v5M2 6.500h8M6 7v4" fill="none" stroke="#111" strokeWidth="1.200" /></svg>
        </button>
        <button type="button" aria-label="关闭导航栏">
          <svg viewBox="0 0 12 12" className="mr-[2px] size-3"><path d="M2 2.500l8 8M10 2.500l-8 8" stroke="#333" /></svg>
        </button>
      </div>
      <div className="mt-px flex shrink-0 flex-col border-t border-[#a0a0a0]">
        <button type="button" className={wide}>工程设置</button>
        <button type="button" className={wide}>绘图输入</button>
      </div>
      <div className="flex min-h-0 flex-1 flex-col border-l border-[#a0a0a0] bg-[#f3f3f3] pb-px pl-px">
        <div className="flex h-[27px] shrink-0 items-center gap-2 pl-1 pt-px">
          <button type="button" aria-label="全部展开">
            <svg viewBox="0 0 16 14" className="h-[14px] w-4"><path d="M5 0v9M.500 4.500h9" stroke="#0b2b26" strokeWidth="3" /><path d="M5 1v7M1.500 4.500h7" stroke="#1f8f7c" /><path d="M12 6v8M8.500 10h7.500" stroke="#0b2b26" strokeWidth="3" /><path d="M12 7v6M9 10h6" stroke="#1f8f7c" /></svg>
          </button>
          <button type="button" aria-label="全部折叠">
            <svg viewBox="0 0 16 14" className="h-[14px] w-4"><path d="M0 4.500h9M7 10h9" stroke="#0b2b26" strokeWidth="3" /><path d="M1 4.500h7M8 10h7" stroke="#1f8f7c" /></svg>
          </button>
        </div>
        <div className="flex min-h-0 flex-1 flex-col border border-[#828790] bg-white pt-px">
          <div className="flex min-h-0 flex-1 pr-[2px]">
            <ul className="min-w-0 flex-1 overflow-hidden">
              {TREE.map(({ label, items }) => {
                const isOpen = items && !closed[label];
                return (
                  <li key={label}>
                    <button type="button" onClick={() => setClosed({ ...closed, [label]: !closed[label] })} className="flex h-4 items-center leading-4">
                      <span className="flex w-[18px] justify-end pr-px"><Chevron dir={isOpen ? 'down' : 'right'} color={isOpen ? '#404040' : '#a0a0a0'} /></span>
                      <span className="mr-px w-1 border-t border-dotted border-[#8a8a8a]" />
                      <Icon name={isOpen ? 'folderOpen' : 'folder'} />
                      <span className="ml-1">{label}</span>
                    </button>
                    {isOpen && (
                      <ul>
                        {items.map(([icon, name], i) => (
                          <TreeLeaf key={name} icon={icon} label={name} last={i === items.length - 1} selected={selected === name} onSelect={() => setSelected(name)} />
                        ))}
                      </ul>
                    )}
                  </li>
                );
              })}
            </ul>
            <div className="flex w-4 shrink-0 flex-col items-center bg-[#f0f0f0] py-[3px]">
              <Chevron dir="up" />
              <div className="mt-[64px] h-[247px] w-full bg-[#cdcdcd]" />
              <div className="mt-auto"><Chevron dir="down" /></div>
            </div>
          </div>
          <div className="flex h-[17px] shrink-0 items-center bg-[#f0f0f0] pl-1">
            <Chevron dir="left" />
            <div className="mx-1 h-[14px] w-[95px] bg-[#cdcdcd]" />
            <span className="ml-2"><Chevron dir="right" /></span>
          </div>
        </div>
      </div>
      <div className="flex shrink-0 flex-col border-t border-[#a0a0a0]">
        <button type="button" className={wide}>单构件输入</button>
        <button type="button" className={wide}>报表预览</button>
      </div>
    </aside>
  );
}

// Axis number in its bubble
const Bubble = ({ x, y, text }) => (
  <g>
    <path d={`M${x - 5} ${y - 12}h10l7 7v10l-7 7h-10l-7-7v-10z`} fill="none" stroke="#008a00" strokeDasharray="4 1" />
    {text && <text x={x} y={y + 5} textAnchor="middle" fill="#e8e8e8" fontSize="14">{text}</text>}
  </g>
);

function Viewport() {
  return (
    <div className="min-h-0 flex-1 overflow-hidden bg-black">
      <svg viewBox="0 0 1200 310" preserveAspectRatio="xMinYMin slice" className="h-full w-full [font-family:'Liberation_Sans',sans-serif]" role="img" aria-label="三维视图">
        <Bubble x={13} y={89} text="A1" />
        <Bubble x={257} y={13} text="5" />
        <Bubble x={424} y={13} text="6" />
        <Bubble x={489} y={13} text="A" />
        <Bubble x={517} y={15} text="A" />
        <Bubble x={591} y={13} text="7" />
        <Bubble x={757} y={13} text="8" />
        <Bubble x={973} y={13} text="B" />
        <Bubble x={925} y={13} />
        <Bubble x={1091} y={13} />
        <Bubble x={525} y={133} text="A1" />

        <g stroke="#ff0000" fill="none" shapeRendering="crispEdges">
          <path d="M43 0l5 92M84 0l6 96M235 0l7 109M256 0l7 111M392 0l3 42M423 0l3 42M453 0l3 45M590 0l8 139M756 0l9 154" />
          <path d="M0 89l340 29M337 0l193 17M526 133h11M758 36l442 38M765 154l435 37M822 0l378 32M1119 1l81 7" />
        </g>
        <g stroke="#008a00" fill="none" shapeRendering="crispEdges">
          <path d="M530 17l228 19M537 134l228 20M604 0l9 141M680 0l9 147M672 21l22 17M602 133l23 16M679 140l22 15" />
        </g>

        {/* foundation and the two columns */}
        <g shapeRendering="crispEdges">
          <path d="M340 57l183 16 5 83-182-16z" fill="#a0b75c" />
          <path d="M340 57l-3 20 5 82 4-19z" fill="#6d7d3f" />
          <path d="M346 140l182 16-4 19-182-16z" fill="#7e9048" />
          <path d="M390 37l46 4 1 31-45-3z" fill="#0073e6" />
          <path d="M392 69l45 3-9 50-46-4z" fill="#005ab4" />
          <path d="M390 37l2 32-10 49-3-24z" fill="#004f9e" />
          <path d="M452 43l45 3 2 31-46-3z" fill="#0073e6" />
          <path d="M453 74l46 3-10 50-46-3z" fill="#005ab4" />
          <path d="M452 43l1 31-10 50-3-30z" fill="#004f9e" />
        </g>

        {/* walls */}
        <g shapeRendering="crispEdges">
          <path d="M919 0h21l4 87-16 81z" fill="#737373" />
          <path d="M940 0h12l5 87h-13z" fill="#adadad" />
          <path d="M944 87h13l-17 82-12-1z" fill="#878787" />
          <path d="M1091 0h16l5 101-16 81-9-158z" fill="#737373" />
          <path d="M1107 0h13l5 102-13-1z" fill="#adadad" />
          <path d="M1112 101l13 1-16 81-13-1z" fill="#878787" />
          <path d="M1178 174l22 2v112l-16-2z" fill="#a0b75c" />
          <path d="M1178 174l-3 15 7 108 2-11z" fill="#6d7d3f" />
          <path d="M1184 286l16 2v10l-18-1z" fill="#7e9048" />
          <path d="M1176 0l11 190M1176 189l24 2M928 168l12 1M1096 182l13 1" stroke="#ff0000" fill="none" />
        </g>

        <g fill="#e0e0e0" fontSize="15">
          <text transform="translate(716 106) rotate(-90)">3400</text>
          <text transform="translate(711 26) rotate(-90)">1200</text>
        </g>

        {/* orbit ring */}
        <g fill="none" stroke="#fff" strokeOpacity=".5">
          <circle cx="599.500" cy="155" r="137.500" />
          <circle cx="462" cy="155" r="8.500" />
          <circle cx="737" cy="155" r="8.500" />
          <circle cx="599.500" cy="17.500" r="8.500" />
          <circle cx="599.500" cy="292.500" r="8.500" />
        </g>

        {/* view axes */}
        <path d="M55 260l38 3" stroke="#f00" strokeWidth="4" />
        <path d="M92 259l12 5-12 3z" fill="#f00" />
        <path d="M54 260v-24" stroke="#0f0" strokeWidth="4" />
        <path d="M54 228l-5 6h9z" fill="#0f0" />
        <path d="M55 260l5-26" stroke="#0080ff" strokeWidth="4" />
        <path d="M62 223l-6 11 9 2z" fill="#0080ff" />
        <path d="M91 248l9 9M100 248l-9 9" stroke="#f00" />
        <path d="M65 229l3 4 3-4M68 233v5" stroke="#0f0" fill="none" />
        <path d="M49 218h9l-9 9h9" stroke="#0080ff" fill="none" />
      </svg>
    </div>
  );
}

function SnapBar() {
  return (
    <div className="flex h-[31px] shrink-0 items-center pl-[2px]">
      <Group><Grip /><Tools items={SNAP_MODES} /></Group>
      <Group><Grip /><Tools items={SNAP_POINTS} /></Group>
      <Group className="ml-[2px] pl-[3px] pr-1">
        <Grip />
        <Combo label="偏移方式" options={['不偏移', '正交偏移', '极坐标偏移']} className="w-[58px]" />
        <Sep />
        <span className="mr-[3px] text-[#7b7b7b]">X=</span>
        <Spin label="X" value="0" className="w-[58px]" />
        <span className="ml-[2px] mr-1 text-[#7b7b7b]">mm</span>
        <span className="mr-[3px] text-[#7b7b7b]">Y=</span>
        <Spin label="Y" value="0" className="w-[58px]" />
        <span className="ml-[2px] mr-[2px] text-[#7b7b7b]">mm</span>
        <Sep />
        <label className="mr-[5px] flex items-center gap-[7px]">
          <input type="checkbox" className="size-3 appearance-none border border-[#8a8a8a] bg-[#f4f4f4]" />
          旋转
        </label>
        <Spin label="旋转角度" value="0.000" className="w-[68px]" />
        <span className="ml-[2px] text-[#7b7b7b]">°</span>
      </Group>
    </div>
  );
}

function RebarPanel() {
  return (
    <section className="flex h-[202px] shrink-0">
      <div className="flex w-3 shrink-0 flex-col items-center gap-1 py-[3px]">
        <button type="button" aria-label="关闭钢筋表">
          <svg viewBox="0 0 11 11" className="size-[11px]"><path d="M.5.5h10v10H.5z" fill="#e4e4e4" stroke="#333" /><path d="M0 1h11" stroke="#8f3c46" strokeWidth="1.500" /><path d="M2 3l7 6M9 3L2 9" stroke="#111" strokeWidth="1.300" /></svg>
        </button>
        <div className="flex w-[6px] flex-1 justify-between">
          <span className="border-l-2 border-dotted border-[#c4c4c4]" />
          <span className="border-l-2 border-dotted border-[#c4c4c4]" />
        </div>
      </div>
      <div className="flex min-w-0 flex-1 flex-col pr-[2px]">
        <div className="flex h-[30px] shrink-0 items-center bg-linear-to-b from-[#fdfdfd] to-[#f1f1f1] pl-1">
          <Tools items={REBAR_TOOLS} />
          <span className="ml-1 whitespace-nowrap">单构件钢筋总重(kg)：0</span>
        </div>
        <div className="flex min-h-0 flex-1 flex-col border border-[#a0a0a0] bg-white pr-px">
          <div className="min-h-0 flex-1 overflow-hidden">
            <table className="w-[1218px] table-fixed border-collapse">
              <colgroup>{COLUMNS.map(([name, w]) => <col key={name} className={w} />)}</colgroup>
              <thead>
                <tr className="h-[19px]">
                  {COLUMNS.map(([name]) => (
                    <th
                      key={name}
                      scope="col"
                      className={`overflow-hidden whitespace-nowrap border-r border-b border-[#bcbcbc] p-0 font-normal ${
                        name === '图形' ? 'bg-linear-to-b from-[#f9d99f] to-[#efbd63] text-[#5a0a4a]' : 'bg-linear-to-b from-white to-[#eeeeee]'
                      }`}
                    >
                      <Song>{name}</Song>
                    </th>
                  ))}
                </tr>
              </thead>
              <tbody>
                <tr className="h-[19px]">
                  {COLUMNS.map(([name], i) => (
                    <td
                      key={name}
                      className={`border-b border-[#bcbcbc] p-0 text-center ${i === 1 ? 'border-r border-r-black' : 'border-r'} ${
                        i === 0 ? 'bg-[#ffd48f] text-[#5a0a4a]' : name === '图形' ? 'bg-[#d8e9f8]' : ''
                      }`}
                    >
                      {i === 0 && <Song>1*</Song>}
                    </td>
                  ))}
                </tr>
              </tbody>
            </table>
          </div>
          <div className="flex h-[17px] shrink-0 items-center justify-between bg-[#f0f0f0] px-1">
            <Chevron dir="left" />
            <div className="mx-1 flex-1"><div className="h-[15px] w-[72%] bg-[#cdcdcd]" /></div>
            <Chevron dir="right" />
          </div>
        </div>
      </div>
    </section>
  );
}

function StatusBar() {
  const cell = 'flex h-5 items-center whitespace-nowrap border border-[#d4d4d4] pl-px bg-linear-to-b from-white to-[#f1f1f1]';
  return (
    <footer className="flex h-[22px] shrink-0 items-center gap-[2px]">
      <span className={`${cell} w-[148px]`}><span><Song>X=318097 Y=10691</Song></span></span>
      <span className={`${cell} w-[78px]`}><span><Song>层高:2.15m</Song></span></span>
      <span className={`${cell} w-[98px]`}><span><Song>底标高:-2.2m</Song></span></span>
      <span className={`${cell} w-[48px]`}><span><Song>0</Song></span></span>
      <span className={`${cell} flex-1`} />
      <span className={`${cell} w-[70px]`}><span><Song>221.8 FPS</Song></span></span>
    </footer>
  );
}

function Taskbar() {
  return (
    <div className="flex h-10 shrink-0 bg-[#06171c] text-white">
      <button type="button" aria-label="开始" className="flex w-12 items-center justify-center bg-black">
        <svg viewBox="0 0 16 16" className="size-[17px]"><path d="M0 2.300l6.500-.9v6.100H0zM7.500 1.200L16 0v7.500H7.500zM0 8.500h6.500v6.100L0 13.700zM7.500 8.500H16V16l-8.500-1.200z" fill="#fff" /></svg>
      </button>
      <label className="flex w-[344px] items-center bg-[#f1f1f1] pl-[9px] pr-3">
        <svg viewBox="0 0 22 22" className="size-[22px] shrink-0"><circle cx="11" cy="11" r="8.700" fill="none" stroke="#111" strokeWidth="3" /></svg>
        <input placeholder="在这里输入你要搜索的内容" aria-label="搜索" className="ml-[9px] min-w-0 flex-1 bg-transparent text-sm text-black outline-none placeholder:text-[#333]" />
        <svg viewBox="0 0 16 20" className="h-[18px] w-4"><rect x="5" y="1" width="6" height="11" rx="2.500" fill="none" stroke="#333" strokeWidth="1.300" /><path d="M2.500 9v3q0 2.500 2.500 2.500h6q2.500 0 2.500-2.500V9M8 14.500V19M5 19h6" fill="none" stroke="#333" strokeWidth="1.200" /></svg>
      </label>
      <button type="button" aria-label="任务视图" className="flex w-12 items-center justify-center">
        <svg viewBox="0 0 18 18" className="size-[18px]"><path d="M1.500 5.500h10v7h-10zM1.500 1v2h10V1M1.500 17v-2h10v2M15.500 1v3M15.500 8v9" fill="none" stroke="#fff" strokeWidth="1.200" /><path d="M14 5h3v3h-3z" fill="#fff" /></svg>
      </button>
      <button type="button" aria-label="浏览器" className="flex w-[52px] items-center justify-center">
        <svg viewBox="0 0 22 22" className="size-[22px]"><rect x="1" y="1" width="9.500" height="9.500" rx="4" fill="#e9eef0" /><rect x="11.500" y="1" width="9.500" height="9.500" rx="4" fill="#e9eef0" /><rect x="1" y="11.500" width="9.500" height="9.500" rx="4" fill="#e9eef0" /><rect x="11.500" y="11.500" width="9.500" height="9.500" rx="4" fill="#e9eef0" /><path d="M5 5.500q5-1 6 5.500M16.500 5q1 5-5.500 6M17 16.500q-5 1-6-5.500M5.500 17q-1-5 5.500-6" stroke="#06171c" fill="none" /></svg>
      </button>
      <label className="my-[5px] flex w-[150px] items-center border border-[#7a7a7a] bg-[#464646] px-[5px]">
        <svg viewBox="0 0 18 18" className="size-[18px] shrink-0"><path d="M14.500 11.500A6 6 0 113.500 9 5.700 5.700 0 0115 9.500H5.500" fill="none" stroke="#33a7ff" strokeWidth="2.600" /><path d="M1 16Q0 12 7 5.500T16.500 2q1 1-.5 4" fill="none" stroke="#5fbcff" strokeWidth="1.300" /></svg>
        <input placeholder="搜索网页和文件" aria-label="搜索网页和文件" className="ml-1 min-w-0 flex-1 bg-transparent text-[12px] outline-none placeholder:text-[#b4b4b4]" />
        <svg viewBox="0 0 18 18" className="size-[18px] shrink-0"><circle cx="8" cy="8" r="6.500" fill="none" stroke="#b4b4b4" strokeWidth="1.300" /><path d="M13 13l4 4" stroke="#b4b4b4" strokeWidth="1.300" /></svg>
      </label>
      <button type="button" aria-label="助手" className="ml-2 flex w-[33px] items-center justify-center">
        <svg viewBox="0 0 30 30" className="size-[30px]"><path d="M19 10A8.500 8.500 0 1021 20M18 15a4.500 4.500 0 10-3.500 6.500q5-1 4-6.500M14 13q-4 3 0 5 3 0 2-3" fill="none" stroke="#dfe5e6" strokeWidth="1.500" /><path d="M19 10q2-1 2-5 0-4 3-5 4 1 4 5t2 5z" fill="#e8b21c" /><path d="M22 11.500h4" stroke="#e8b21c" strokeWidth="2" /></svg>
      </button>
      <button type="button" aria-label="广联达" className="ml-4 flex w-10 items-center justify-center border-b-2 border-[#76b9ed] pt-[2px]">
        <svg viewBox="0 0 24 24" className="size-6"><rect width="24" height="24" rx="5" fill="#0c8ce9" /><path d="M17 7q-1.500-2.500-4-2.500t-2 3v12M4.500 12.500H20M4.500 12.500q.5 6 6.500 7M20 12.500q-.5 3.500-4.500 5" fill="none" stroke="#fff" strokeWidth="2" /></svg>
      </button>
      <button type="button" aria-label="便笺" className="ml-[9px] flex w-10 items-center justify-center border-b-2 border-[#76b9ed] pt-[2px]">
        <svg viewBox="0 0 24 24" className="size-6"><rect width="24" height="24" rx="2" fill="#f39a18" /><path d="M3 6l13-2 2 14-12 3z" fill="#fff8e6" stroke="#c96b08" /><path d="M6 9l7-1M6.500 12l6-1M7 15l5-1" stroke="#b9803a" /><path d="M22 2L13 15l-1 4 3-3 9-12z" fill="#7a3510" /></svg>
      </button>
      <div className="ml-auto flex w-[17px] flex-col items-center justify-between bg-[#f0f0f0] py-1">
        <Chevron dir="up" />
        <Chevron dir="down" />
      </div>
      <div className="flex items-center pl-[21px]">
        <svg viewBox="0 0 18 18" className="size-[18px]"><circle cx="11.500" cy="4.500" r="2.800" fill="none" stroke="#fff" strokeWidth="1.200" /><circle cx="5.500" cy="9.500" r="2.300" fill="none" stroke="#fff" strokeWidth="1.200" /><path d="M1.500 16.500q0-4.500 4-4.500t4 4.500M9 9q5-3.500 8 2.500" fill="none" stroke="#fff" strokeWidth="1.200" /></svg>
        <svg viewBox="0 0 14 14" className="ml-5 size-[14px]"><path d="M1.500 9.500L7 4l5.500 5.500" fill="none" stroke="#fff" strokeWidth="1.300" /></svg>
        <svg viewBox="0 0 18 14" className="ml-[9px] h-[14px] w-[18px]"><path d="M6.500 4h10v7.500H5.500V8" fill="none" stroke="#fff" strokeWidth="1.200" /><path d="M8 5.500h7V10H8zM1 2h5v3L4.500 7v5h-1V7L1 5z" fill="#fff" /><path d="M2 0v2M5 0v2" stroke="#fff" /></svg>
        <svg viewBox="0 0 14 14" className="ml-2 size-[14px]"><path d="M2 13A11 11 0 0113 2M5 13a8 8 0 018-8M8 13a5 5 0 015-5" fill="none" stroke="#d8dcdd" strokeWidth="1.200" /><circle cx="12" cy="12.500" r="1.500" fill="#fff" /></svg>
        <svg viewBox="0 0 16 14" className="ml-[7px] h-[14px] w-4"><path d="M1 5h2.500L7 2v10L3.500 9H1zM9 5q1.500 2 0 4M11 3q3 4 0 8M13 1.500q4.500 5.500 0 11" fill="none" stroke="#fff" /></svg>
        <svg viewBox="0 0 24 14" className="ml-2 h-[14px] w-6"><path d="M.5.5h23v13H.5z" fill="none" stroke="#fff" /><path d="M3 4h18M3 7h18" stroke="#fff" strokeDasharray="2 1" strokeWidth="1.500" /><path d="M6 10.500h12M3 10.500h1.500M20 10.500h1.500" stroke="#fff" strokeWidth="1.500" /></svg>
        <span className="ml-[10px] text-[13px]">中</span>
        <svg viewBox="0 0 16 16" className="ml-[14px] size-4"><rect width="16" height="16" rx="4" fill="#f04a1d" /><path d="M12.500 4.200Q5 2.500 4.500 5.500q0 2 4 2.300 3.500.4 3 2.500-.7 2.700-8 1.500" fill="none" stroke="#fff" strokeWidth="2.200" /></svg>
        <div className="ml-[17px] text-center text-[12px] leading-[19px]">
          <div>21:15</div>
          <div>2018/11/1</div>
        </div>
        <div className="relative ml-6 mr-5 size-[18px]">
          <svg viewBox="0 0 18 18" className="size-[18px]"><path d="M1 1h15v11H9l-3 4v-4H1z" fill="#fff" /><path d="M3.500 4h10M3.500 6.500h10M3.500 9h6" stroke="#06171c" /></svg>
          <span className="absolute left-2 top-2 flex size-[15px] items-center justify-center rounded-full border border-[#8b9294] bg-[#2d3335] text-[10px] font-bold leading-none">2</span>
        </div>
      </div>
    </div>
  );
}

function App() {
  return (
    <div className="flex h-screen flex-col overflow-hidden bg-[#efefef] text-[12px] leading-4 text-[#111] [font-family:'Noto_Sans','Noto_Sans_CJK_SC',sans-serif]">
      <TitleBar />
      <MenuBar />
      <MainBar />
      <main className="flex min-h-0 flex-1 gap-[5px] pt-px">
        <Sidebar />
        <div className="flex min-w-0 flex-1 flex-col">
          <div className="flex h-[28px] shrink-0 items-center pl-[2px]">
            <Group><Grip /><Tools items={EDIT_TOOLS} /></Group>
          </div>
          <div className="flex h-[28px] shrink-0 items-center gap-px pl-[2px]">
            <Group>
              <Grip />
              <Combo label="楼层" options={['基础层', '首层']} className="w-[58px]" />
              <Combo label="构件类型" options={['柱', '墙', '梁', '板']} className="w-[69px]" />
              <Combo label="构件" options={['框柱', '暗柱', '端柱']} className="w-[69px]" />
              <Combo label="名称" options={['KZ-1']} className="w-[69px]" />
              <Tools items={MEMBER_TOOLS} />
            </Group>
            <Group><Grip /><Tools items={AXIS_TOOLS} /></Group>
          </div>
          <div className="flex h-[28px] shrink-0 items-center gap-px pl-[2px]">
            <Group><Grip /><Tools items={DRAW_TOOLS} /></Group>
            <Group><Grip /><span className="w-5" /></Group>
          </div>
          <Viewport />
          <SnapBar />
          <RebarPanel />
        </div>
      </main>
      <StatusBar />
      <Taskbar />
    </div>
  );
}

export default App;
